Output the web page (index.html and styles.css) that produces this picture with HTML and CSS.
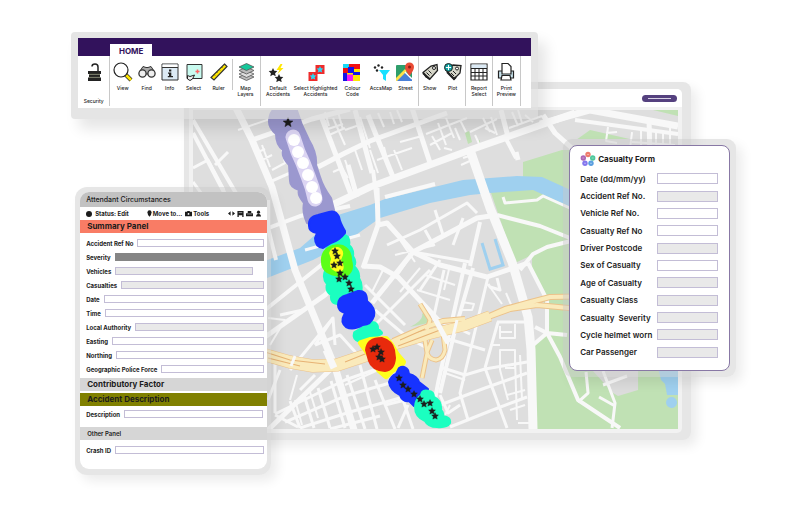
FILE: index.html
```html
<!DOCTYPE html>
<html lang="en">
<head>
<meta charset="utf-8">
<meta name="viewport" content="width=device-width, initial-scale=1">
<title>Accident map</title>
<link rel="stylesheet" href="styles.css">
</head>
<body>
<main class="desktop">

<section class="frame map-window">
  <div class="map-body">
    <header class="map-head"><button class="pill" type="button" aria-label="Menu"><span class="pill-line"></span></button></header>
    <svg class="map" viewBox="193 110 485 319" role="img" aria-label="Accident heat map">
      <defs>
        <path id="star" d="M0-3.400 1-1.200 3.400-1 1.600.7 2.200 3.100 0 1.900-2.200 3.100-1.600.7-3.400-1-1-1.200Z"/>
      </defs>
      <rect x="193" y="110" width="485" height="319" fill="#dedede"/>
      <g fill="#c0e1b4">
        <path d="M523 162 562 150 590 130 678 150V429H535V343L548 330 543 293 532 273V255L515 263 490 190 523 186Z"/>
        <path d="M653 110H678V116ZM465 133 469 131 472 142 468 144ZM478 141 480 140V144H478ZM427 310 428 323 410 327Q424 320 422 314Z"/>
      </g>
      <path fill="#dedede" d="M562 139H678V150H562Z"/>
      <path fill="#dcdcdc" d="M592 370 613 393 618 396 638 390V365H592Z"/>
      <path fill="#9fd0ef" d="M262 262 300 248 338 215 370 205 385 199 430 188 463 180 517 176 542 177 575 192V209L533 190 490 193 470 195 430 203 380 218 340 246 313 260 262 280Z"/>
      <path fill="#9fd0ef" d="M658 368H678V395H667L665 384 661 380ZM672 397A5 5 0 1 1 671 408 5 5 0 0 1 672 397Z"/>
      <path fill="none" stroke="#9fd0ef" stroke-width="3" d="M482 243 490 269 503 265 495 239"/>
      <g fill="none" stroke="#f8f8f8" stroke-linejoin="round">
        <g stroke-width="7">
          <path d="M236 108 252 140 272 187 295 270 335 367 354 430"/>
          <path d="M328 207 370 187 470 150 575 113"/>
          <path d="M540 124 590 110 678 126"/>
        </g>
        <path stroke-width="9" d="M470 150 490 208 512 262 528 317 531 350 533 430"/>
        <g stroke-width="5">
          <path d="M318 167 345 153 370 141 447 113M368 115 393 177M412 108 430 163M501 110 508 137"/>
          <path d="M543 115 555 133 574 150M377 188 378 225 363 268M378 225 387 223 413 252M497 215 477 218 413 252 372 303"/>
          <path d="M362 266 380 267 398 277 438 320 465 330M265 337 325 295 350 270M348 165 357 197M355 110 372 173M321 116 352 197"/>
          <path d="M413 252 440 265 487 277 528 263M252 140 312 119 350 109M649 120 650 160M268 430 330 370"/>
        </g>
        <g stroke-width="4">
          <path d="M497 215 540 226 575 240M520 270 533 254 547 247 575 240M480 222 470 266M465 263 438 383 433 410"/>
          <path d="M473 268 455 330 440 393M528 263 547 300 547 333 560 357 578 400 620 428M535 327 547 333 567 335M547 333 533 345"/>
          <path d="M505 137 516 158M193 120 240 200M193 133 226 196M265 310 325 262M385 197 435 184"/>
          <path d="M268 228 300 216 350 206M268 200 268 228 276 260M373 170 378 210M575 120 678 134"/>
        </g>
        <g stroke-width="3">
          <path d="M503 197 505 203 537 200 543 196 572 209M578 402 588 393 586 372M603 371 615 403 612 428M599 397 615 406M603 385 627 376"/>
          <path d="M387 245 420 230 467 203 477 213M435 210 443 235M425 230 434 246M463 218 453 245M413 252 470 262M395 278 413 252"/>
          <path d="M267 183 292 172M193 168 208 160 224 190M215 165 228 152M193 182 228 230M305 250 360 235"/>
          <path d="M440 405 485 388 527 373M450 427 490 411 527 397M485 368 507 428M465 375 485 369 527 362M440 367 465 375"/>
          <path d="M488 277 460 393 468 420M440 320 470 334M497 322H527M498 322 485 368M497 278 500 290 490 287 488 284M445 338 485 350"/>
          <path d="M275 360V413M275 415 298 427M275 414 345 380 388 365M285 422 345 396 400 380M300 428 350 412 400 398M330 429 380 416"/>
          <path d="M290 401 300 428M304 395 314 428M318 388 330 428M331 381 345 428M347 375 365 429M360 365 377 429M375 380 395 429M385 405 425 395M398 428 408 405M403 400 413 429"/>
          <path d="M280 370 268 400M315 375 300 390M335 345 333 318 315 345M280 315 303 310M375 310 408 338 425 347M375 325 405 295 430 270M440 260 420 290M433 320 444 270M440 395 448 413 460 405"/>
          <path d="M333 318 290 370M315 345 340 335 358 355M365 285 390 310 405 325"/>
        </g>
        <g stroke-width="2">
          <path d="M238 130 290 112M262 145 270 167M262 160 272 155M258 152 265 149M272 170 285 163 282 150M286 158 305 150M325 120 333 148M333 118 345 145M329 135 345 128M325 130 343 124M329 126 325 112M338 112 343 130M345 160 352 180M333 172 342 168 348 178M360 117 370 148M345 130 362 124M378 113 384 127M390 112 394 124M397 110 402 122M355 150 362 170M384 147 390 172M377 160 412 148M405 128 445 113M400 142 422 136M426 134 467 118M430 145 452 133M438 123 446 145M446 118 454 138M432 136 440 150M444 148 452 150M455 128 460 140M460 120 466 132M470 132 497 119M475 135 480 146M483 118 490 132M491 117 497 135M485 128 495 133M512 112 518 126M518 110 522 123M509 128 542 116M525 115 533 122M394 150 402 170M370 150 378 173M463 158 475 154M461 165 472 160"/>
          <path d="M608 127 606 141 617 143M606 133 617 132M632 132 630 148M641 130 641 148M656 132 656 148M663 133 663 148M670 127 670 148M632 142 675 145"/>
          <path d="M490 287 502 304M506 293 512 307M462 302 474 304 472 310 462 310M500 326V338H515V324M500 332H512M500 370V350H515V368H505M490 345H500M500 370 508 400M515 360 517 420M520 355 522 400M507 395 525 390M510 410 525 405M518 423H530M400 240 415 262M395 255 435 245M425 275 455 285M417 290 450 300"/>
          <path d="M383 270 372 292M420 268 400 292M450 265 444 290M445 373 465 380M445 415 450 405M270 345 285 320 268 318M297 375 290 400M345 385 400 360M295 400 302 425M310 392 318 418"/>
        </g>
        <path stroke-width="5" d="M516 152 518 160"/>
      </g>
      <g fill="none" stroke-linejoin="round">
        <g stroke="#ecc28a">
          <path stroke-width="13" d="M262 354 290 362 313 366 337 365 367 355 395 345"/>
          <path stroke-width="11" d="M390 346 430 334 463 326 490 316"/>
          <path stroke-width="6" d="M393 341 420 329 443 321 465 319M480 320 505 309 527 303 550 297 600 296M480 320 510 309 537 305 600 311"/>
          <path stroke-width="5" d="M420 304 430 320 427 330M425 340 427 353 422 378M443 333 445 350Q443 359 436 360 428 359 427 352L432 340"/>
        </g>
        <g stroke="#faeabb">
          <path stroke-width="12" d="M262 354 290 362 313 366 337 365 367 355 395 345"/>
          <path stroke-width="10" d="M390 346 430 334 463 326 490 316"/>
          <path stroke-width="4" d="M393 341 420 329 443 321 465 319M480 320 505 309 527 303 550 297 600 296M480 320 510 309 537 305 600 311"/>
          <path stroke-width="3" d="M420 304 430 320 427 330M425 340 427 353 422 378M443 333 445 350Q443 359 436 360 428 359 427 352L432 340"/>
        </g>
        <path stroke="#e7b274" stroke-width="1" d="M265 352 290 360 325 364M268 358 300 366M345 362 370 352M398 346 440 330M400 340 425 329"/>
        <g stroke="#f8f8f8">
          <path stroke-width="7" d="M326 350 334 368"/>
          <path stroke-width="5" d="M433 315 448 343"/>
          <path stroke-width="3" d="M457 320 452 340M295 356 291 366"/>
        </g>
      </g>
      <g stroke-linejoin="round" stroke-width="2">
        <path fill="#9b98cf" stroke="#9b98cf" d="M275 108H296L302 125 309 140Q317 153 316 165L320 177Q323 187 331 198L335 214 312 224 307 223Q302 212 304 203 297 195 299 190 290 187 290 181L289 165Q281 157 283 150 276 145 276 134 269 128 269 122 269 113 275 108Z"/>
        <path fill="none" stroke="#dcd5f3" stroke-width="15" stroke-linecap="round" d="M293 137 298 152 303 163 308 176 312 187 315 199"/>
        <g fill="#fff"><circle cx="294" cy="140" r="6"/><circle cx="298" cy="152" r="6"/><circle cx="303" cy="163" r="6"/><circle cx="308" cy="175" r="6"/><circle cx="312" cy="187" r="6"/><circle cx="316" cy="198" r="6"/></g>
        <path fill="#1bffc0" stroke="#1bffc0" d="M337 237Q343 232 348 237 350 241 349 245 354 249 353 256 357 262 354 266 360 272 359 278 363 284 361 293L355 304H338Q330 304 331 295 325 291 327 284 322 278 325 271V254Q326 247 330 245Z"/>
        <path fill="#1733ff" stroke="#1733ff" d="M309 226Q308 217 318 215L329 212Q336 210 339 217 340 223 345 231L345 233Q339 241 331 243L323 248Q315 247 315 238L317 233Q309 232 309 226Z"/>
        <path fill="#5cff17" d="M321 262Q320 252 328 247 334 243 343 245 352 249 352 260 355 270 349 275 341 279 335 276 321 273 321 262Z"/>
        <path fill="#ffff1c" d="M329 253Q331 246 338 247 344 249 343 255L341 260Q345 265 343 270 338 274 333 270 328 267 331 259Z"/>
        <path fill="#1bffc0" stroke="#1bffc0" stroke-width="4" d="M355 333 372 323Q377 323 377 329L381 333 372 338 360 341Q353 339 355 333Z"/>
        <path fill="#1733ff" stroke="#1733ff" d="M338 305Q338 297 347 295L358 291Q367 290 367 301 376 308 374 316 371 325 363 325 353 331 346 327 340 322 344 315L345 313Q338 311 338 305Z"/>
        <path fill="#ffff1c" stroke="#ffff1c" stroke-width="6" d="M361 343 370 340 386 339 391 345 397 355 403 362 401 365 392 370 386 376 379 370 369 354Z"/>
        <path fill="#e82a0c" d="M365 350Q366 337 382 337 393 340 395 350L396 358Q395 371 385 372 371 371 368 361Z"/>
        <path fill="#1733ff" stroke="#1733ff" d="M389 382Q391 376 396 374L399 368Q404 365 408 370L409 374Q417 376 419 382L428 389 426 398 414 406 409 401Q402 402 400 395 390 390 389 382Z"/>
        <path fill="#1bffc0" stroke="#1bffc0" d="M421 395Q422 389 429 391 434 392 434 397 442 401 441 410 444 412 443 416 451 417 450 423 447 428 437 427 428 427 425 421 415 417 415 407 415 400 421 395Z"/>
      </g>
      <g fill="#1c1c1c" stroke="#1c1c1c" stroke-width=".4">
        <path d="M288 117.500 289.400 120.800 293 121 290.200 123.300 291.100 126.700 288 124.800 284.900 126.700 285.800 123.300 283 121 286.600 120.800Z"/>
        <use href="#star" x="335" y="251"/><use href="#star" x="337" y="256"/><use href="#star" x="334" y="265"/><use href="#star" x="340" y="263"/><use href="#star" x="340" y="273"/><use href="#star" x="339" y="279"/><use href="#star" x="345" y="277"/><use href="#star" x="349" y="283"/><use href="#star" x="351" y="289"/>
        <use href="#star" x="373" y="349"/><use href="#star" x="377" y="347"/><use href="#star" x="381" y="352"/><use href="#star" x="379" y="357"/><use href="#star" x="382" y="359"/>
        <use href="#star" x="399" y="378"/><use href="#star" x="403" y="385"/><use href="#star" x="408" y="389"/><use href="#star" x="414" y="394"/><use href="#star" x="420" y="399"/><use href="#star" x="424" y="404"/><use href="#star" x="430" y="403"/><use href="#star" x="432" y="411"/><use href="#star" x="435" y="416"/>
      </g>
    </svg>
  </div>
</section>

<section class="frame ribbon">
  <div class="ribbon-body">
    <nav class="tabs"><a class="tab" href="#home">HOME</a></nav>
    <div class="groups" id="home">
      <div class="group g-security">
        <button class="tool tool-tall" type="button">
          <svg viewBox="0 0 20 20"><path d="M8 4.500Q8 2 11 2q3 0 3 3v5" fill="none" stroke="#222" stroke-width="1.500"/><path d="M4 9h13v3H4zM5 12.500h11v2.500H5zM4 15.500h13V19H4z" fill="#222"/><path d="M5 12.300h11M5 15.300h11" stroke="#66694f" stroke-width=".8"/></svg>
          <span>Security</span></button>
      </div>
      <div class="group g-find">
        <button class="tool" type="button"><svg viewBox="0 0 20 20"><path d="m12 12 6 6" stroke="#222" stroke-width="4"/><path d="m13 13 5 5" stroke="#ffe600" stroke-width="2.600"/><circle cx="8" cy="8" r="7" fill="#fff" stroke="#222" stroke-width="1.200"/></svg><span>View</span></button>
        <button class="tool" type="button"><svg viewBox="0 0 20 20"><path d="M3 9 6 4.500l3 1h2l3-1L17 9l-5 3H8Z" fill="#aaa" stroke="#333"/><circle cx="5.500" cy="11.500" r="3.600" fill="#eee" stroke="#333" stroke-width="1.300"/><circle cx="14.500" cy="11.500" r="3.600" fill="#eee" stroke="#333" stroke-width="1.300"/></svg><span>Find</span></button>
        <button class="tool" type="button"><svg viewBox="0 0 20 20"><path d="M2 2h16v16H2z" fill="#dceaf5" stroke="#333"/><path d="M2.500 2.500h15V5h-15z" fill="#fff"/><path d="M2 5.500h16" stroke="#333"/><path d="M9 7.500h2.300v2H9zM8 10.500h3.300V14H13v1.300H7.800V14H9v-2.200H8z" fill="#222"/></svg><span>Info</span></button>
        <button class="tool" type="button"><svg viewBox="0 0 20 20"><path d="M3 2.500h15v14H3z" fill="#c9fbf0" stroke="#333"/><path d="M13.500 7.500v4M11.500 9.500h4" stroke="#f66" stroke-width="1.500"/><path d="m3.500 13.500 2.500 1 4.500-1.500-2 4-2.500 1.500-2.500-1.500Z" fill="#eee" stroke="#222"/></svg><span>Select</span></button>
        <button class="tool" type="button"><svg viewBox="0 0 20 20"><path d="M15.500 2 18 4.500 5 18 2 15.500Z" fill="#ffe600" stroke="#333" stroke-width="1.200"/><path d="m5 12.500 1 1M7.500 10l1 1M10 7.500l1 1M12.500 5l1 1" stroke="#333" stroke-width=".8"/></svg><span>Ruler</span></button>
        <button class="tool tool-split" type="button"><svg viewBox="0 0 20 20"><g stroke="#555" stroke-width=".8"><path d="m3 15 7.500-3.500L18 15l-7.500 3.500Z" fill="#bbb"/><path d="m3 12 7.500-3.500L18 12l-7.500 3.500Z" fill="#ddd"/><path d="m3 8.500L10.500 5 18 8.500 10.500 12Z" fill="#bbb"/><path d="m3 5 7.500-3.500L18 5l-7.500 3.500Z" fill="#16c79a"/></g></svg><span>Map<br>Layers</span></button>
      </div>
      <div class="group g-accidents">
        <button class="tool" type="button"><svg viewBox="0 0 20 20"><path fill="#222" d="m5 6 1.300 2.800 3 .3-2.200 2.100.6 3L5 12.700l-2.700 1.500.6-3L.7 9.100l3-.3ZM11 12l1.300 2.800 3 .3-2.200 2.100.6 3-2.700-1.500-2.700 1.500.6-3-2.200-2.100 3-.3Z"/><path d="m12.500 2-4 6h3l-2 4 6-6h-3l2-4Z" fill="#ffe600"/></svg><span>Default<br>Accidents</span></button>
        <button class="tool" type="button"><svg viewBox="0 0 20 20"><path d="M9.500 3h9v9h-9zM2.500 10h9v9h-9z" fill="#ef2b2b"/><g fill="#28d9f5"><use href="#star" x="14" y="7.500"/><use href="#star" x="7" y="14.500"/></g></svg><span>Select Highlighted<br>Accidents</span></button>
        <button class="tool" type="button"><svg viewBox="0 0 20 20"><path d="M1 2h17v17H1z" fill="#ffe600"/><path d="M1 2h6v4H1z" fill="#18d9f5"/><path d="M7 2h11v5h-6V5H7z" fill="#f21010"/><path d="M1 6h5v5H1z" fill="#f21010"/><path d="M6 5h6v5h6v3h-7v-2H6zM1 11h4v8H1z" fill="#1414e6"/><path d="M5 12.500h6V19H5z" fill="#f31bf3"/></svg><span>Colour<br>Code</span></button>
        <button class="tool" type="button"><svg viewBox="0 0 20 20"><path d="M8 8h11l-4 5v6l-3-2v-4Z" fill="#18e0ff"/><g fill="#222"><circle cx="4" cy="5.500" r="1.200"/><circle cx="7.500" cy="3.500" r="1.200"/><circle cx="11" cy="5.500" r="1.200"/><circle cx="6" cy="8.500" r="1.200"/></g></svg><span>AccsMap</span></button>
        <button class="tool" type="button"><svg viewBox="0 0 20 20"><rect x="1" y="3" width="16" height="16" rx="1" fill="#2f9e6b"/><path d="m1 19 9-9 7 7v2Z" fill="#4a80d8"/><path d="m1 16 9-9 2 2-10 10H1Z" fill="#ffe14a"/><path d="m10 10 7 7" stroke="#fff" stroke-width="1.500"/><path d="M14.500 14Q10 8 10 5a4.500 4.500 0 0 1 9 0q0 3-4.500 9Z" fill="#ea4b35"/><circle cx="14.500" cy="5" r="1.500" fill="#8c1d16"/></svg><span>Street</span></button>
      </div>
      <div class="group g-show">
        <button class="tool" type="button"><svg viewBox="0 0 20 20"><path d="M3 10.500 11 4l6-1.500.500 6L10 17l-4-2Z" fill="#d6d6c9" stroke="#222" stroke-width="1.300"/><path d="m3 11 7 6.500" stroke="#222" stroke-width="2"/><circle cx="14" cy="6" r="1.500" fill="#fff" stroke="#222"/><path d="m6.500 10.500 3 3M8.500 8.500l3 3" stroke="#222"/></svg><span>Show</span></button>
        <button class="tool" type="button"><svg viewBox="0 0 20 20"><path d="m3 8 7-5 8 .5L17 11l-6 6Z" fill="#d6d6c9" stroke="#222" stroke-width="1.300"/><path d="m4 10 7 7 2-2" fill="none" stroke="#222" stroke-width="2"/><circle cx="14" cy="6.500" r="1.500" fill="#fff" stroke="#222"/><path d="m8 11 3 3M10 9l3 3" stroke="#222"/><circle cx="5.500" cy="5.500" r="4" fill="#15a5a5" stroke="#222"/><path d="M5.500 3v5M3 5.500h5" stroke="#fff"/></svg><span>Plot</span></button>
      </div>
      <div class="group g-one"><button class="tool" type="button"><svg viewBox="0 0 20 20"><path d="M2 2h16v16H2z" fill="#fff" stroke="#222" stroke-width="1.200"/><path d="M2.500 2.500h15V6h-15z" fill="#dceaf5"/><path d="M2 6.500h16M2 10.500h16M2 14h16M6 6.500V18M10 6.500V18M14 6.500V18" stroke="#222"/></svg><span>Report<br>Select</span></button></div>
      <div class="group g-one"><button class="tool" type="button"><svg viewBox="0 0 20 20"><path d="M2.500 9h15v7h-15z" fill="#c9e4ee" stroke="#222" stroke-width="1.200"/><path d="M6 1.500h6l3 3V12H6z" fill="#fff" stroke="#222" stroke-width="1.200"/><path d="M6 13.500h8l1 4.500H5Z" fill="#fff" stroke="#222" stroke-width="1.200"/></svg><span>Print<br>Preview</span></button></div>
    </div>
  </div>
</section>

<section class="frame panel">
  <form class="panel-body">
    <h1 class="panel-title">Attendant Circumstances</h1>
    <div class="panel-bar">
      <span class="status"><i class="dot"></i>Status: Edit</span>
      <button type="button"><svg class="i-pin" viewBox="0 0 6 8"><path d="M3 8Q.5 5 .5 2.700a2.500 2.500 0 0 1 5 0Q5.500 5 3 8Z"/></svg>Move to...</button>
      <button type="button"><svg class="i-wide" viewBox="0 0 8 8"><path d="M2.500 2V1h3v1H8v5H0V2Z"/><circle cx="4" cy="4.500" r="1" fill="#fff"/></svg>Tools</button>
      <span class="bar-icons">
        <svg viewBox="0 0 8 8"><path d="m0 4 3-2.500v5ZM8 4 5 1.500v5Z"/></svg>
        <svg viewBox="0 0 8 8"><path d="M.5 1h7v7H6V6H2v2H.5Z"/><path d="M2 3h4" stroke="#fff" stroke-width=".6"/></svg>
        <svg viewBox="0 0 8 8"><path d="M0 4 2 3V1h4v2l2 1v3H0Z"/><path d="M1 4.500h6" stroke="#fff" stroke-width=".6"/></svg>
        <svg viewBox="0 0 8 8"><circle cx="4" cy="2.500" r="1.800"/><path d="M1 7.500Q1 5 4 4q3 1 3 3.500Z"/></svg>
      </span>
    </div>
    <h2 class="band band-coral">Summary Panel</h2>
    <div class="rows">
      <div class="row"><label for="arn">Accident Ref No</label><input id="arn"></div>
      <div class="row"><label for="sev">Severity</label><input id="sev" class="dark"></div>
      <div class="row row-short"><label for="veh">Vehicles</label><input id="veh" class="grey"></div>
      <div class="row"><label for="cas">Casualties</label><input id="cas" class="grey"></div>
      <div class="row"><label for="dat">Date</label><input id="dat"></div>
      <div class="row"><label for="tim">Time</label><input id="tim"></div>
      <div class="row"><label for="loc">Local Authority</label><input id="loc" class="grey"></div>
      <div class="row"><label for="eas">Easting</label><input id="eas"></div>
      <div class="row"><label for="nor">Northing</label><input id="nor"></div>
      <div class="row"><label for="gpf">Geographic Police Force</label><input id="gpf"></div>
    </div>
    <h2 class="band band-grey">Contributory Factor</h2>
    <h2 class="band band-olive">Accident Description</h2>
    <div class="rows rows-single"><div class="row"><label for="des">Description</label><input id="des"></div></div>
    <h2 class="band band-small">Other Panel</h2>
    <div class="rows rows-last"><div class="row"><label for="cid">Crash ID</label><input id="cid"></div></div>
  </form>
</section>

<section class="frame casualty">
  <form class="casualty-body">
    <h1 class="casualty-title">
      <svg viewBox="0 0 16 16"><circle cx="8" cy="3.500" r="2.700" fill="#ee7b6c"/><circle cx="12.700" cy="7" r="2.700" fill="#4fc79b"/><circle cx="11" cy="12.300" r="2.700" fill="#5a9fe0"/><circle cx="5" cy="12.300" r="2.700" fill="#8477ee"/><circle cx="3.300" cy="7" r="2.700" fill="#ac66b4"/><path d="M7 3.500h2M11.700 7h2M10 12.300h2M4 12.300h2M2.300 7h2" stroke="#fff" stroke-width=".8" opacity=".5"/></svg>
      Casualty Form</h1>
    <div class="fields">
      <label for="c1">Date (dd/mm/yy)</label><input id="c1">
      <label for="c2">Accident Ref No.</label><input id="c2" class="grey">
      <label for="c3">Vehicle Ref No.</label><input id="c3">
      <label for="c4">Casualty Ref No</label><input id="c4">
      <label for="c5">Driver Postcode</label><input id="c5" class="grey">
      <label for="c6">Sex of Casualty</label><input id="c6">
      <label for="c7">Age of Casualty</label><input id="c7" class="grey">
      <label for="c8">Casualty Class</label><input id="c8" class="grey">
      <label for="c9">Casualty&nbsp; Severity</label><input id="c9" class="grey">
      <label for="c10">Cycle helmet worn</label><input id="c10" class="grey">
      <label for="c11">Car Passenger</label><input id="c11" class="grey">
    </div>
  </form>
</section>

</main>
</body>
</html>
```
FILE: styles.css
```css
* { box-sizing: border-box; }
body { margin: 0; background: #fff; color: #1c1c1c; font-family: Inter, "Liberation Sans", sans-serif; }
h1, h2 { margin: 0; }
button { border: 0; padding: 0; background: none; color: inherit; font: inherit; }
input { min-width: 0; padding: 0; border: 1px solid #c3bdd6; border-radius: 0; background: #fff; font: inherit; }
input.grey { background: #e9e9e9; }
input.dark { background: #858585; border-color: #858585; }

.desktop { position: relative; min-height: 100vh; overflow: hidden; }
.frame { position: absolute; border-radius: 8px; background: rgba(200, 200, 200, .45); box-shadow: 6px 6px 12px rgba(0, 0, 0, .08); }

/* map window */
.map-window { left: 23.3%; right: 12.6%; top: 82px; padding: 7px 9px 7px 5px; }
.map-body { padding: 0 4px 4px; border-radius: 5px; background: #f2f2f2; overflow: hidden; }
.map-head { display: flex; justify-content: flex-end; align-items: center; height: 18px; margin: 0 -4px 3px; padding-right: 5px; background: #fff; }
.pill { display: flex; align-items: center; justify-content: center; width: 35px; height: 7px; border-radius: 4px; background: #55417f; }
.pill-line { width: 23px; height: 1px; background: #d8d2e6; }
.map { display: block; width: 100%; height: auto; }

/* ribbon */
.ribbon { left: 9%; width: 59%; top: 32px; padding: 6px 7px 11px; border-radius: 4px; background: rgba(212, 212, 212, .6); box-shadow: 8px 10px 14px rgba(0, 0, 0, .1); }
.ribbon-body { background: #fff; }
.tabs { display: flex; align-items: flex-end; height: 18px; padding-left: 32px; background: #32125c; }
.tab { width: 42px; height: 12px; background: #fff; color: #32125c; font-size: 8px; font-weight: 700; line-height: 14px; text-align: center; text-decoration: none; }
.groups { display: grid; grid-template-columns: 32fr 151fr 158fr 47fr 27fr 28fr 10fr; height: 52px; padding-bottom: 2px; }
.group { display: grid; border-right: 1px solid #c8c8c8; }
.g-find { grid-template-columns: 25fr 23fr 23fr 25fr 25fr 29fr; }
.g-accidents { grid-template-columns: 34fr 41fr 33fr 24fr 25fr; }
.g-show { grid-template-columns: 22fr 25fr; }
.tool { display: flex; flex-direction: column; align-items: center; min-width: 0; padding-top: 6px; font-size: 5px; font-weight: 500; line-height: 6px; color: #222; text-align: center; white-space: nowrap; }
.tool svg { width: 20px; height: 20px; flex: none; margin-bottom: 3px; }
.tool-tall span { margin-top: 13px; }
.tool-split { position: relative; }
.tool-split::before { content: ""; position: absolute; left: 1px; top: 3px; width: 1px; height: 31px; background: #c8c8c8; }

/* attendant circumstances */
.panel { left: 9.5%; width: 24.8%; top: 187px; padding: 5px 4px 6px 5px; border-radius: 12px; }
.panel-body { border-radius: 9px; background: #fff; overflow: hidden; font-size: 6px; font-weight: 700; }
.panel-title { height: 15px; padding-left: 6px; background: #c2c2c2; font-size: 7px; font-weight: 500; line-height: 16px; }
.panel-bar { display: flex; align-items: center; height: 13px; padding: 0 5px 0 6px; }
.panel-bar svg { height: 7px; fill: #1c1c1c; }
.panel-bar button { display: flex; align-items: center; gap: 1px; }
.status { display: flex; align-items: center; gap: 3px; margin-right: 18px; }
.dot { width: 6px; height: 6px; border-radius: 50%; background: #1c1c1c; }
.i-pin { width: 5px; }
.i-wide { width: 7px; margin-left: 3px; }
.bar-icons { display: flex; gap: 2px; margin-left: auto; }
.bar-icons svg { width: 7px; }
.band { height: 13px; padding-left: 7px; font-size: 8px; font-weight: 700; line-height: 13px; }
.band-coral { background: #f97c65; }
.band-grey { background: #d6d6d6; margin-bottom: 2px; }
.band-olive { background: #808000; }
.band-small { background: #d6d6d6; font-size: 6px; font-weight: 600; }
.rows { display: grid; grid-auto-rows: 14px; padding: 3px 3px 2px 6px; }
.row { display: flex; align-items: center; gap: 4px; white-space: nowrap; }
.row input { flex: 1; height: 8px; }
.row-short { padding-right: 11px; }
.rows-single { padding: 1px 4px 6px 6px; }
.rows-last { padding: 3px 3px 12px 6px; }

/* casualty form */
.casualty { left: 71.2%; width: 21.9%; top: 139px; padding: 6px; border-radius: 9px; }
.casualty-body { padding: 5px 11px 9px 10px; border: 1px solid #8878a5; border-radius: 8px; background: #fff; font-size: 8px; font-weight: 600; }
.casualty-title { display: flex; align-items: center; gap: 2px; height: 16px; font-size: 8px; font-weight: 700; }
.casualty-title svg { width: 16px; height: 16px; }
.fields { display: grid; grid-template-columns: 1fr 61px; grid-auto-rows: 1fr; align-items: center; height: 191px; margin-top: 3px; white-space: nowrap; }
.fields input { width: 100%; height: 11px; }
```
